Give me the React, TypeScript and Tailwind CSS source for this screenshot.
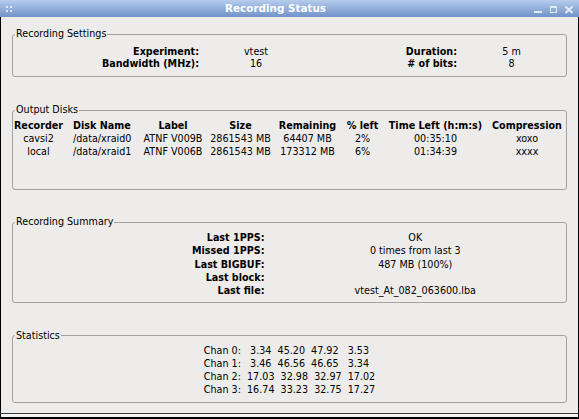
import type { ReactNode } from 'react';

interface Disk {
  recorder: string;
  disk: string;
  label: string;
  size: string;
  remaining: string;
  pct: string;
  time: string;
  comp: string;
}

const disks: Disk[] = [
  { recorder: 'cavsi2', disk: '/data/xraid0', label: 'ATNF V009B', size: '2861543 MB', remaining: '64407 MB', pct: '2%', time: '00:35:10', comp: 'xoxo' },
  { recorder: 'local', disk: '/data/xraid1', label: 'ATNF V006B', size: '2861543 MB', remaining: '173312 MB', pct: '6%', time: '01:34:39', comp: 'xxxx' },
];

const summary: [string, string][] = [
  ['Last 1PPS:', 'OK'],
  ['Missed 1PPS:', '0 times from last 3'],
  ['Last BIGBUF:', '487 MB (100%)'],
  ['Last block:', ''],
  ['Last file:', 'vtest_At_082_063600.lba'],
];

// formatted like "%6.2f" in a proportional font, so the spaces matter
const stats = [
  'Chan 0:   3.34  45.20  47.92   3.53',
  'Chan 1:   3.46  46.56  46.65   3.34',
  'Chan 2:  17.03  32.98  32.97  17.02',
  'Chan 3:  16.74  33.23  32.75  17.27',
];

function GroupBox({ title, className, children }: { title: string; className: string; children: ReactNode }) {
  return (
    <fieldset className={`rounded-[3px] border border-[#a2a2a2] ${className}`}>
      <legend className="ml-[2px] px-[1px] leading-[12px]">{title}</legend>
      {children}
    </fieldset>
  );
}

function TitleBar() {
  return (
    <div className="flex h-[17px] shrink-0 items-center bg-linear-to-b from-[#b6cced] to-[#7193c9]">
      <div className="h-full w-[18px]">
        <svg width="18" height="17" viewBox="0 0 18 17" fill="#dfe7f4">
          <rect x="6" y="6" width="2" height="2" />
          <rect x="10" y="6" width="2" height="2" />
          <rect x="6" y="10" width="2" height="2" />
          <rect x="10" y="10" width="2" height="2" />
        </svg>
      </div>
      <div className="flex-1 text-center text-[10.4px] font-bold leading-[17px] text-white">Recording Status</div>
      <div className="h-full w-[46px]">
        <svg width="46" height="17" viewBox="0 0 46 17" fill="none" stroke="#e3eaf5">
          <rect x="1" y="11" width="8" height="2" fill="#e3eaf5" stroke="none" />
          <rect x="17.5" y="7.5" width="6" height="5" strokeWidth="1" />
          <line x1="17" y1="7" x2="24" y2="7" strokeWidth="2" />
          <line x1="32.5" y1="6.5" x2="39.5" y2="13" strokeWidth="2" />
          <line x1="39.5" y1="6.5" x2="32.5" y2="13" strokeWidth="2" />
        </svg>
      </div>
    </div>
  );
}

export default function App() {
  return (
    <div className="flex h-[419px] w-[579px] flex-col overflow-hidden bg-[#edeceb] font-['DejaVu_Sans',sans-serif] text-[9.6px] text-black">
      <TitleBar />

      <div className="flex-1 border-x border-black px-[11px] pt-[11px]">
        <GroupBox title="Recording Settings" className="pt-[6px] pb-[6px]">
          <div className="grid grid-cols-[186px_114px_144px_109px] leading-[12px]">
            <div className="text-right font-bold">Experiment:</div>
            <div className="text-center">vtest</div>
            <div className="text-right font-bold">Duration:</div>
            <div className="text-center">5 m</div>
            <div className="text-right font-bold">Bandwidth (MHz):</div>
            <div className="text-center">16</div>
            <div className="text-right font-bold"># of bits:</div>
            <div className="text-center">8</div>
          </div>
        </GroupBox>

        <GroupBox title="Output Disks" className="mt-[27px] pt-[3px] pb-[31px]">
          <div className="grid grid-cols-[51px_74px_70px_65px_69px_41px_105px_78px] leading-[13px] whitespace-nowrap">
            <div className="text-center font-bold">Recorder</div>
            <div className="pl-[9px] font-bold">Disk Name</div>
            <div className="text-center font-bold">Label</div>
            <div className="text-center font-bold">Size</div>
            <div className="text-center font-bold">Remaining</div>
            <div className="text-center font-bold">% left</div>
            <div className="text-center font-bold">Time Left (h:m:s)</div>
            <div className="text-center font-bold">Compression</div>
            {disks.map((d) => (
              <div key={d.recorder} className="contents">
                <div className="text-center">{d.recorder}</div>
                <div className="pl-[9px]">{d.disk}</div>
                <div className="text-center">{d.label}</div>
                <div className="text-center">{d.size}</div>
                <div className="text-center">{d.remaining}</div>
                <div className="text-center">{d.pct}</div>
                <div className="text-center">{d.time}</div>
                <div className="text-center">{d.comp}</div>
              </div>
            ))}
          </div>
        </GroupBox>

        <GroupBox title="Recording Summary" className="mt-[26px] pt-[3px] pb-[4.5px]">
          <div className="grid grid-cols-[251.5px_1fr] leading-[13.3px]">
            {summary.map(([k, v]) => (
              <div key={k} className="contents">
                <div className="text-right font-bold">{k}</div>
                <div className="h-[13.3px] text-center">{v}</div>
              </div>
            ))}
          </div>
        </GroupBox>

        <GroupBox title="Statistics" className="mt-[27px] pt-[2.5px] pb-[5.5px]">
          <div className="flex justify-center leading-[13px]">
            <div className="whitespace-pre">
              {stats.map((line) => (
                <div key={line}>{line}</div>
              ))}
            </div>
          </div>
        </GroupBox>
      </div>

      <div className="h-[6px] shrink-0 border-x border-t border-b-2 border-x-black border-t-[#3a3a3a] border-b-black bg-[#f3f3f3]" />
    </div>
  );
}
